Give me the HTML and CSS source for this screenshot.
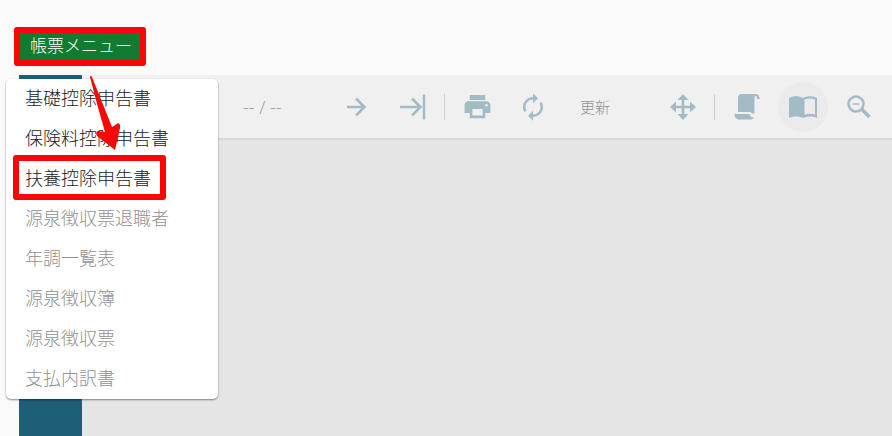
FILE: index.html
```
<!DOCTYPE html>
<html lang="ja">
	<head>
		<meta charset="utf-8">
		<title>帳票メニュー</title>
		<link rel="stylesheet" href="styles.css">
	</head>
	<body>
		<header class="header">
			<div class="dropdown">
				<button type="button" class="menu-btn marked">帳票メニュー</button>
				<ul class="menu">
					<li><button type="button">基礎控除申告書</button></li>
					<li><button type="button">保険料控除申告書</button></li>
					<li class="target"><button type="button">扶養控除申告書</button></li>
					<li><button type="button" disabled>源泉徴収票退職者</button></li>
					<li><button type="button" disabled>年調一覧表</button></li>
					<li><button type="button" disabled>源泉徴収簿</button></li>
					<li><button type="button" disabled>源泉徴収票</button></li>
					<li><button type="button" disabled>支払内訳書</button></li>
				</ul>
				<svg class="pointer" width="40" height="80" viewBox="0 0 40 80">
					<path d="M5 2Q5 0 7 2Q13 17 27 52L31 49.500Q34 47 35 50L35 53L30 75L12 61Q10 57 13 56L20 57Q12 30 5 2Z" fill="#fb0505"/>
				</svg>
			</div>
		</header>
		<div class="viewer">
			<nav class="side"></nav>
			<main class="main">
				<div class="toolbar">
					<span class="page">-- / --</span>
					<button type="button" class="tool" aria-label="次のページ">
						<svg width="28" height="28" viewBox="0 0 28 28"><path d="M4 14H22M13 5.500L21.500 14L13 22.500" class="line"/></svg>
					</button>
					<button type="button" class="tool" aria-label="最後のページ">
						<svg width="28" height="28" viewBox="0 0 28 28"><path d="M1 14H22M13 5.500L21.500 14L13 22.500M25 1.500V26.500" class="line"/></svg>
					</button>
					<span class="sep"></span>
					<button type="button" class="tool" aria-label="印刷">
						<svg width="31" height="31" viewBox="0 0 24 24"><path d="M19 8H5c-1.660 0-3 1.340-3 3v6h4v4h12v-4h4v-6c0-1.660-1.340-3-3-3zm-3 11H8v-5h8v5zm3-7c-.55 0-1-.45-1-1s.45-1 1-1 1 .45 1 1-.45 1-1 1zm-1-9H6v4h12V3z"/></svg>
					</button>
					<button type="button" class="tool" aria-label="再読込">
						<svg width="30" height="30" viewBox="0 0 24 24"><path d="M12 6v3l4-4-4-4v3c-4.420 0-8 3.580-8 8 0 1.570.46 3.030 1.240 4.260L6.700 14.800c-.45-.83-.7-1.790-.7-2.800 0-3.310 2.690-6 6-6zm6.760 1.740L17.300 9.200c.44.84.7 1.790.7 2.800 0 3.310-2.690 6-6 6v-3l-4 4 4 4v-3c4.420 0 8-3.580 8-8 0-1.570-.46-3.030-1.240-4.260z"/></svg>
					</button>
					<button type="button" class="update">更新</button>
					<button type="button" class="tool" aria-label="移動">
						<svg width="28" height="28" viewBox="0 0 28 28"><path d="M14 1L19.500 7H15.300V12.700H21V8.500L27 14L21 19.500V15.300H15.300V21H19.500L14 27L8.500 21H12.700V15.300H7V19.500L1 14L7 8.500V12.700H12.700V7H8.500Z"/></svg>
					</button>
					<span class="sep"></span>
					<button type="button" class="tool" aria-label="連続表示">
						<svg width="28" height="28" viewBox="0 0 28 28"><path d="M9 1H23C25.500 1 26.500 3 26.500 6H24C24 4 23.500 3 22.500 3C21.500 3 21.500 4 21.500 5V20.500H19L17.500 19H5V5C5 2.500 6.500 1 9 1Z"/><path d="M1.500 21H16.500C17 23.500 18.500 24.500 21 24.500C20 26 19 26.500 17 26.500H6C3 26.500 1.500 24 1.500 21Z"/></svg>
					</button>
					<button type="button" class="tool on" aria-label="見開き表示">
						<svg width="30" height="30" viewBox="0 0 30 30"><path d="M1 6C5 3.500 11 3.500 15 6C19 3.500 25 3.500 29 6V26C25 24 19 24 15 26C11 24 5 24 1 26ZM16.500 7.500V22.800C20 21.500 24 21.500 27 22.500V7.500C24 6 20 6 16.500 7.500Z" fill-rule="evenodd"/></svg>
					</button>
					<button type="button" class="tool" aria-label="縮小">
						<svg width="28" height="28" viewBox="0 0 28 28"><circle cx="11" cy="11" r="7.500" class="line"/><path d="M7.500 11H14.500" class="thin"/><path d="M16.500 16L24.500 24" class="handle"/></svg>
					</button>
				</div>
				<div class="sheet"></div>
			</main>
		</div>
	</body>
</html>
```

FILE: styles.css
```
*,
*::after {
	box-sizing: border-box;
	margin: 0;
	padding: 0;
}
body {
	display: flex;
	flex-direction: column;
	min-height: 100vh;
	background: #fafafa;
	font-family: "Noto Sans CJK JP", sans-serif;
	font-weight: 300;
}
button {
	border: 0;
	background: none;
	font: inherit;
}
li{
	list-style: none;
}
.header {
	height: 75px;
	padding: 27px 14px 0;
}
.dropdown {
	position: relative;
	width: max-content;
}
.menu-btn {
	display: block;
	width: 132px;
	height: 39px;
	padding: 0 0 4px 2px;
	background: #117b30;
	color: #fff;
	font-size: 17px;
	line-height: 23px;
}
.marked,
.target::after {
	border: 6px solid #fb0505;
	border-radius: 3px;
}
/* 帳票の一覧 */
.menu {
	position: absolute;
	top: 52px;
	left: -8px;
	z-index: 1;
	width: 212px;
	background: #fff;
	border-radius: 5px;
	box-shadow: 0 1px 2px rgba(0,0,0,.45);
}
.menu li {
	position: relative;
}
.menu button {
	display: block;
	width: 100%;
	height: 40px;
	padding: 0 19px 4px;
	color: #222;
	font-size: 18px;
	line-height: 36px;
	text-align: left;
}
.menu button:disabled {
	color: #929292;
}
.target::after {
	content: "";
	position: absolute;
	top: -4px;
	left: 7px;
	width: 153px;
	height: 45px;
}
.pointer {
	position: absolute;
	top: 48px;
	left: 71px;
	z-index: 2;
}
.viewer {
	display: flex;
	flex: 1;
	padding-left: 19px;
}
.side {
	width: 63px;
	background: #1e5f78;
}
.main {
	display: flex;
	flex: 1;
	flex-direction: column;
	min-width: 0;
}
.toolbar {
	display: flex;
	align-items: center;
	gap: 6px;
	height: 65px;
	padding-left: 161px;
	background: #f0f0f0;
	border-bottom: 2px solid #d8d8d8;
	overflow: hidden;
}
.page {
	flex: none;
	width: 83px;
	color: #8f9da3;
	font-family: "Open Sans", sans-serif;
	font-size: 18px;
}
.tool {
	display: flex;
	flex: none;
	align-items: center;
	justify-content: center;
	width: 50px;
	height: 50px;
	border-radius: 50%;
	fill: #a2bbc5;
}
.tool.on {
	background: #ebebeb;
}
.line,
.thin,
.handle {
	fill: none;
	stroke: #a2bbc5;
	stroke-width: 2.5;
}
.thin {
	stroke-width: 1.5;
}
.handle {
	stroke-width: 3.5;
}
.sep {
	flex: none;
	width: 1px;
	height: 26px;
	margin-right: 1px;
	background: #d0d0d0;
}
.update {
	flex: none;
	width: 88px;
	height: 50px;
	padding-left: 16px;
	color: #929292;
	font-size: 15px;
	text-align: left;
}
.sheet {
	flex: 1;
	background: #e5e5e5;
}
```
